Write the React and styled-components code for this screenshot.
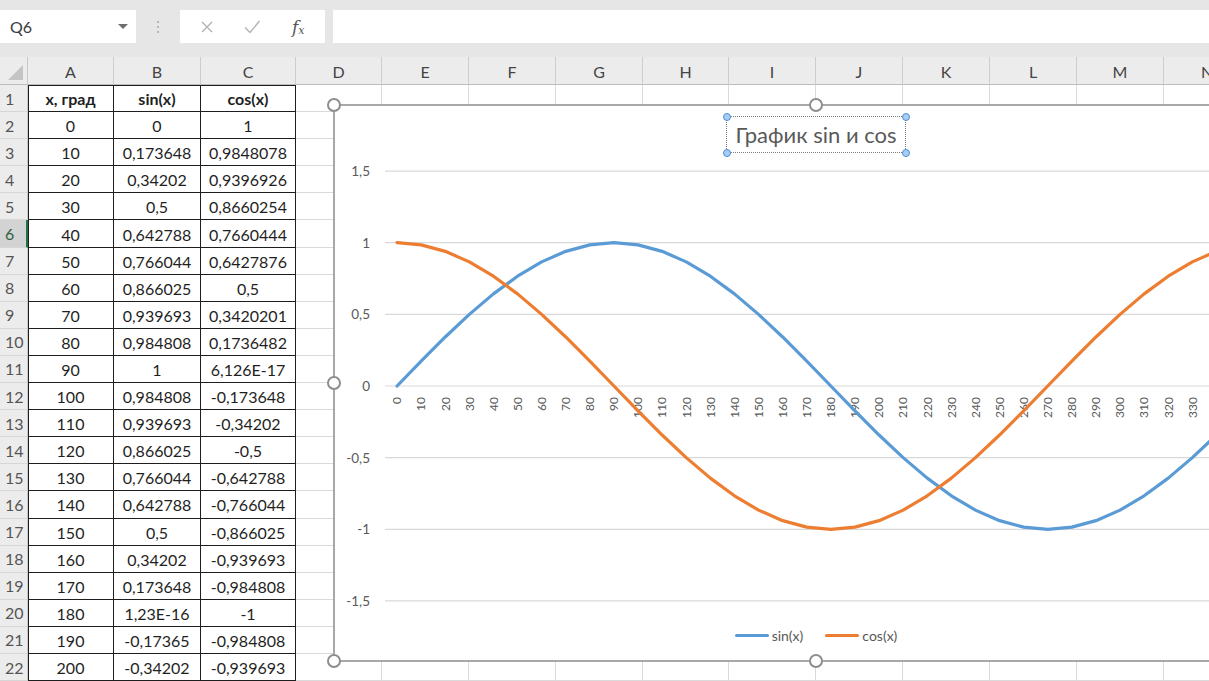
import React from "react";
import styled, { createGlobalStyle } from "styled-components";

const GlobalStyle = createGlobalStyle`
  html, body { margin: 0; padding: 0; background: #ffffff; }
  body { font-family: Lato, "Open Sans", sans-serif; overflow: hidden; }
`;

const App_ = styled.div`
  position: relative;
  width: 1209px;
  height: 681px;
  overflow: hidden;
  background: #ffffff;
`;

/* ---------- formula bar ---------- */
const TopBar = styled.div`
  height: 57px;
  background: #e6e6e6;
  display: flex;
  align-items: flex-start;
  padding-top: 10px;
  box-sizing: border-box;
`;

const NameBox = styled.div`
  width: 136px;
  height: 33px;
  background: #ffffff;
  display: flex;
  align-items: center;
  justify-content: space-between;
  padding: 0 8px 0 10px;
  box-sizing: border-box;
  font-size: 16px;
  color: #3a3a3a;
`;

const DropArrow = styled.span`
  width: 0;
  height: 0;
  border-left: 5px solid transparent;
  border-right: 5px solid transparent;
  border-top: 5px solid #6e6e6e;
`;

const Dots = styled.div`
  width: 44px;
  height: 33px;
  display: flex;
  flex-direction: column;
  align-items: center;
  justify-content: center;
  gap: 3px;
  & > span {
    width: 2px;
    height: 2px;
    border-radius: 50%;
    background: #a8a8a8;
  }
`;

const FuncBox = styled.div`
  width: 145px;
  height: 33px;
  background: #ffffff;
  display: flex;
  align-items: center;
  justify-content: space-around;
  padding: 0 4px;
  box-sizing: border-box;
`;

const FuncIcon = styled.span`
  width: 30px;
  display: flex;
  justify-content: center;
  align-items: center;
`;

const Fx = styled.span`
  font-family: "DejaVu Serif", "Liberation Serif", serif;
  font-style: italic;
  font-size: 17px;
  color: #555555;
  & > sub {
    font-size: 11px;
    vertical-align: -1px;
  }
`;

const FormulaInput = styled.div`
  flex: 1;
  height: 33px;
  margin-left: 8px;
  background: #ffffff;
`;

/* ---------- sheet ---------- */
const COLS = [86, 87, 95, 86, 87, 87, 87, 86, 87, 87, 87, 87, 87, 87];
const LETTERS = ["A", "B", "C", "D", "E", "F", "G", "H", "I", "J", "K", "L", "M", "N"];

const Sheet = styled.div`
  display: grid;
  grid-template-columns: 28px ${COLS.map((c) => c + "px").join(" ")};
  grid-template-rows: 28px repeat(22, 27.1px);
  width: max-content;
`;

const Corner = styled.div`
  background: #ececec;
  border-right: 1px solid #c8c8c8;
  border-bottom: 1px solid #bcbcbc;
  box-sizing: border-box;
  position: relative;
  &::after {
    content: "";
    position: absolute;
    right: 4px;
    bottom: 4px;
    width: 15px;
    height: 15px;
    background: #c4c4c4;
    clip-path: polygon(100% 0, 100% 100%, 0 100%);
  }
`;

const ColHead = styled.div`
  background: #ececec;
  border-right: 1px solid #cdcdcd;
  border-bottom: 1px solid #bcbcbc;
  box-sizing: border-box;
  display: flex;
  align-items: center;
  justify-content: center;
  font-size: 16px;
  color: #444444;
  padding-top: 2px;
`;

const RowHead = styled.div`
  background: ${(p) => (p.$active ? "#d3d3d3" : "#ececec")};
  border-right: ${(p) => (p.$active ? "2px solid #217346" : "1px solid #c8c8c8")};
  border-bottom: 1px solid #d6d6d6;
  box-sizing: border-box;
  display: flex;
  align-items: center;
  padding-left: 5px;
  font-size: 16px;
  color: ${(p) => (p.$active ? "#2f5f43" : "#555555")};
`;

const Cell = styled.div`
  box-sizing: border-box;
  border-right: 1px solid ${(p) => (p.$table ? "#1e1e1e" : "#dadada")};
  border-bottom: 1px solid ${(p) => (p.$table ? "#1e1e1e" : "#dadada")};
  box-shadow: ${(p) =>
    [p.$first ? "inset 1px 0 0 #1e1e1e" : null, p.$top ? "inset 0 1px 0 #1e1e1e" : null]
      .filter(Boolean)
      .join(", ") || "none"};
  display: flex;
  align-items: center;
  justify-content: center;
  font-size: 16px;
  font-weight: ${(p) => (p.$bold ? 700 : 400)};
  color: #1f1f1f;
  white-space: nowrap;
  overflow: hidden;
  padding-top: 1px;
`;

const TABLE = [
  ["x, град", "sin(x)", "cos(x)"],
  ["0", "0", "1"],
  ["10", "0,173648", "0,9848078"],
  ["20", "0,34202", "0,9396926"],
  ["30", "0,5", "0,8660254"],
  ["40", "0,642788", "0,7660444"],
  ["50", "0,766044", "0,6427876"],
  ["60", "0,866025", "0,5"],
  ["70", "0,939693", "0,3420201"],
  ["80", "0,984808", "0,1736482"],
  ["90", "1", "6,126E-17"],
  ["100", "0,984808", "-0,173648"],
  ["110", "0,939693", "-0,34202"],
  ["120", "0,866025", "-0,5"],
  ["130", "0,766044", "-0,642788"],
  ["140", "0,642788", "-0,766044"],
  ["150", "0,5", "-0,866025"],
  ["160", "0,34202", "-0,939693"],
  ["170", "0,173648", "-0,984808"],
  ["180", "1,23E-16", "-1"],
  ["190", "-0,17365", "-0,984808"],
  ["200", "-0,34202", "-0,939693"],
];

/* ---------- chart ---------- */
const ChartFrame = styled.div`
  position: absolute;
  left: 333px;
  top: 104px;
  width: 966px;
  height: 558px;
  box-sizing: border-box;
  border: 2px solid #a8a8a8;
  background: #ffffff;
  display: flex;
  flex-direction: column;
  align-items: center;
`;

const Handle = styled.span`
  position: absolute;
  left: ${(p) => p.$x - 7}px;
  top: ${(p) => p.$y - 7}px;
  width: 14px;
  height: 14px;
  box-sizing: border-box;
  border-radius: 50%;
  border: 2px solid #8e8e8e;
  background: #ffffff;
  z-index: 2;
`;

const TitleBox = styled.div`
  position: relative;
  margin-top: 10px;
  width: 180px;
  height: 37px;
  box-sizing: border-box;
  border: 1px dotted #7a7a7a;
  display: flex;
  align-items: center;
  justify-content: center;
  font-size: 22px;
  color: #595959;
  white-space: nowrap;
`;

const TitleDot = styled.span`
  position: absolute;
  width: 8px;
  height: 8px;
  box-sizing: border-box;
  border-radius: 50%;
  border: 1px solid #4a8fd6;
  background: #a9cdf2;
  ${(p) => (p.$r ? "right: -4.5px;" : "left: -4.5px;")}
  ${(p) => (p.$b ? "bottom: -4.5px;" : "top: -4.5px;")}
`;

const Plot = styled.svg`
  display: block;
  width: 962px;
  height: 470px;
  flex: none;
  font-family: Lato, "Open Sans", sans-serif;
`;

const Legend = styled.div`
  margin-top: 4px;
  display: flex;
  align-items: center;
  gap: 22px;
  height: 16px;
  font-size: 14px;
  color: #595959;
`;

const LegendItem = styled.div`
  display: flex;
  align-items: center;
  gap: 3px;
`;

const LegendLine = styled.span`
  width: 34px;
  height: 3px;
  border-radius: 2px;
  background: ${(p) => p.$color};
`;

const BLUE = "#5b9bd5";
const ORANGE = "#ed7d31";

const X0 = 62.05;
const STEP = 24.1;
const Y0 = 233;
const UNIT = 143.3;
const cats = Array.from({ length: 37 }, (_, i) => i * 10);
const px = (i) => X0 + STEP * i;
const py = (v) => Y0 - UNIT * v;
const sinPts = cats.map((d, i) => `${px(i).toFixed(2)},${py(Math.sin((d * Math.PI) / 180)).toFixed(2)}`).join(" ");
const cosPts = cats.map((d, i) => `${px(i).toFixed(2)},${py(Math.cos((d * Math.PI) / 180)).toFixed(2)}`).join(" ");
const yTicks = [
  [1.5, "1,5"],
  [1, "1"],
  [0.5, "0,5"],
  [0, "0"],
  [-0.5, "-0,5"],
  [-1, "-1"],
  [-1.5, "-1,5"],
];

function Chart() {
  return (
    <ChartFrame>
      <Handle $x={-1} $y={-1} />
      <Handle $x={481} $y={-1} />
      <Handle $x={-1} $y={277} />
      <Handle $x={-1} $y={555} />
      <Handle $x={481} $y={555} />
      <TitleBox>
        График sin и cos
        <TitleDot />
        <TitleDot $r />
        <TitleDot $b />
        <TitleDot $r $b />
      </TitleBox>
      <Plot viewBox="0 0 962 470">
        {yTicks.map(([v, label]) => (
          <g key={label}>
            <line x1={50} x2={942} y1={py(v)} y2={py(v)} stroke="#d9d9d9" strokeWidth="1.2" />
            <text x={35} y={py(v)} textAnchor="end" dominantBaseline="central" fontSize="13.5" fill="#595959">
              {label}
            </text>
          </g>
        ))}
        {cats.map((d, i) => (
          <text
            key={d}
            transform={`translate(${(px(i) + 4.3).toFixed(2)} ${Y0 + 11}) rotate(-90)`}
            textAnchor="end"
            fontSize="12"
            fill="#595959"
          >
            {d}
          </text>
        ))}
        <polyline points={sinPts} fill="none" stroke={BLUE} strokeWidth="3.2" strokeLinejoin="round" strokeLinecap="round" />
        <polyline points={cosPts} fill="none" stroke={ORANGE} strokeWidth="3.2" strokeLinejoin="round" strokeLinecap="round" />
      </Plot>
      <Legend>
        <LegendItem>
          <LegendLine $color={BLUE} />
          sin(x)
        </LegendItem>
        <LegendItem>
          <LegendLine $color={ORANGE} />
          cos(x)
        </LegendItem>
      </Legend>
    </ChartFrame>
  );
}

export default function App() {
  return (
    <App_>
      <GlobalStyle />
      <TopBar>
        <NameBox>
          Q6
          <DropArrow />
        </NameBox>
        <Dots>
          <span />
          <span />
          <span />
        </Dots>
        <FuncBox>
          <FuncIcon>
            <svg width="14" height="14" viewBox="0 0 14 14">
              <path d="M2 2 L12 12 M12 2 L2 12" stroke="#b2b2b2" strokeWidth="1.4" fill="none" />
            </svg>
          </FuncIcon>
          <FuncIcon>
            <svg width="18" height="16" viewBox="0 0 18 16">
              <path d="M2 8.5 L7 13.5 L16.5 2" stroke="#b2b2b2" strokeWidth="1.4" fill="none" />
            </svg>
          </FuncIcon>
          <FuncIcon>
            <Fx>
              f<sub>x</sub>
            </Fx>
          </FuncIcon>
        </FuncBox>
        <FormulaInput />
      </TopBar>
      <Sheet>
        <Corner />
        {LETTERS.map((l) => (
          <ColHead key={l}>{l}</ColHead>
        ))}
        {TABLE.map((row, r) => (
          <React.Fragment key={r}>
            <RowHead $active={r + 1 === 6}>{r + 1}</RowHead>
            {row.map((v, c) => (
              <Cell key={c} $table $first={c === 0} $top={r === 0} $bold={r === 0}>
                {v}
              </Cell>
            ))}
            {LETTERS.slice(3).map((l) => (
              <Cell key={l} />
            ))}
          </React.Fragment>
        ))}
      </Sheet>
      <Chart />
    </App_>
  );
}
